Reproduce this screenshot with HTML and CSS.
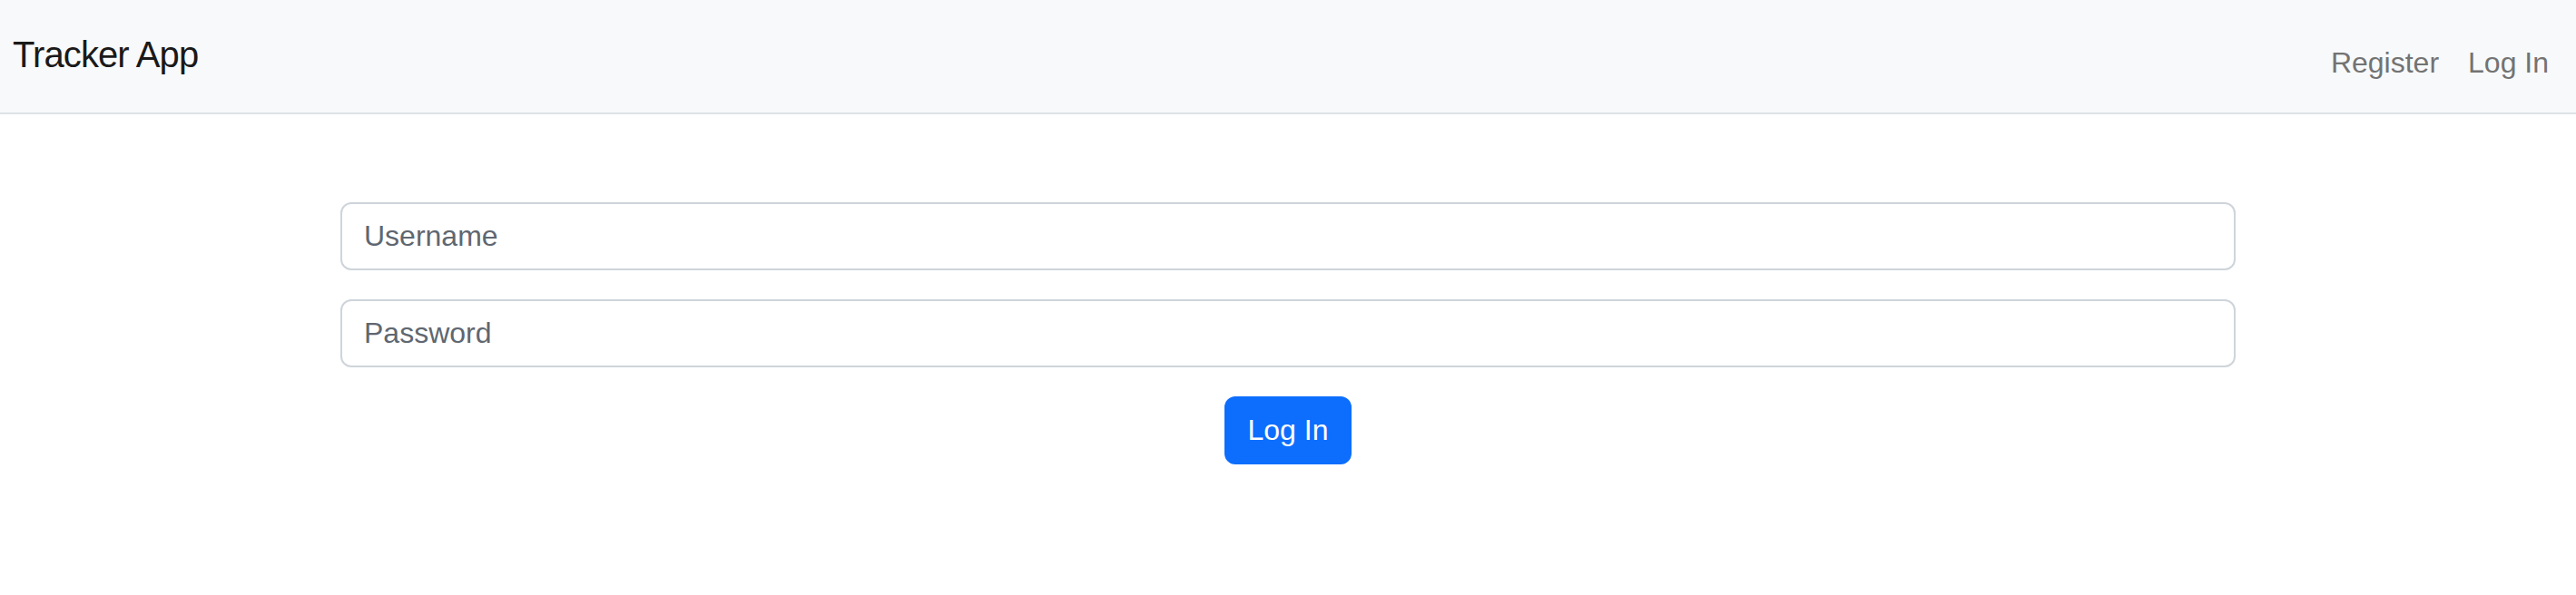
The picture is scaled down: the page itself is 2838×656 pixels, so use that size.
FILE: index.html
```html
<!DOCTYPE html>
<html lang="en">
<head>
<meta charset="utf-8">
<title>Tracker App</title>
<link rel="stylesheet" href="styles.css">
</head>
<body>
<nav class="navbar">
  <a class="brand" href="#">Tracker App</a>
  <div class="nav-links">
    <a class="nav-link" href="#">Register</a>
    <a class="nav-link" href="#">Log In</a>
  </div>
</nav>
<main class="page">
  <form class="login-form">
    <input class="field" type="text" placeholder="Username">
    <input class="field" type="password" placeholder="Password">
    <div class="actions">
      <button class="btn-primary" type="button">Log In</button>
    </div>
  </form>
</main>
</body>
</html>
```

FILE: styles.css
```css
* { box-sizing: border-box; }

html, body {
  margin: 0;
  padding: 0;
  background: #ffffff;
  font-family: "Liberation Sans", Arial, sans-serif;
}

.navbar {
  display: flex;
  justify-content: space-between;
  align-items: flex-start;
  height: 126px;
  padding: 0 14px 0 14px;
  background: #f8f9fa;
  border-bottom: 2px solid #dee2e6;
}

.brand {
  margin-top: 30px;
  font-size: 40px;
  line-height: 60px;
  letter-spacing: -0.9px;
  color: #1a1a1a;
  text-decoration: none;
}

.nav-links {
  display: flex;
  margin-top: 45px;
}

.nav-link {
  padding: 0 16px;
  font-size: 32px;
  line-height: 48px;
  color: #737373;
  text-decoration: none;
}

.page {
  padding-top: 97px;
}

.login-form {
  width: 2088px;
  margin: 0 auto;
  display: flex;
  flex-direction: column;
  gap: 32px;
}

.field {
  display: block;
  width: 100%;
  height: 75px;
  padding: 0 24px;
  font-family: inherit;
  font-size: 32px;
  color: #212529;
  background: #ffffff;
  border: 2px solid #ced4da;
  border-radius: 12px;
  outline: none;
}

.field::placeholder {
  color: #5f6770;
  opacity: 1;
}

.actions {
  display: flex;
  justify-content: center;
}

.btn-primary {
  height: 75px;
  padding: 0 24px;
  font-family: inherit;
  font-size: 32px;
  color: #ffffff;
  background: #0d6efd;
  border: 2px solid #0d6efd;
  border-radius: 12px;
  cursor: pointer;
}
```
